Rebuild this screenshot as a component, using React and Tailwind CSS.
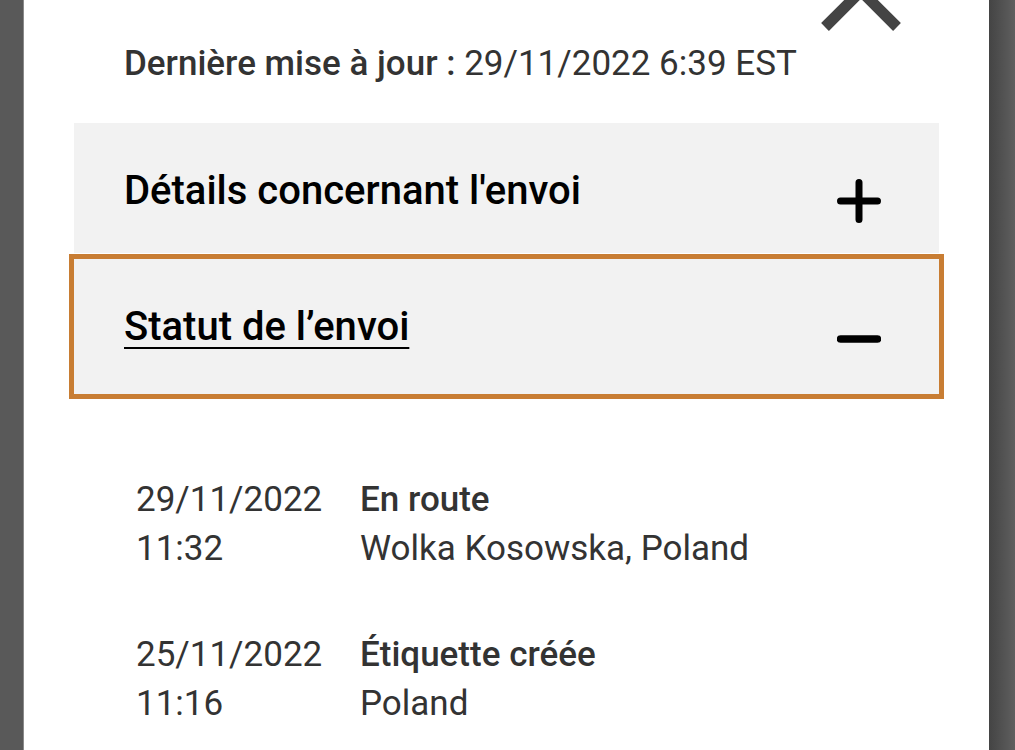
import React from "react";

const events = [
  { date: "29/11/2022", time: "11:32", status: "En route", place: "Wolka Kosowska, Poland" },
  { date: "25/11/2022", time: "11:16", status: "Étiquette créée", place: "Poland" },
];

const Plus = () => (
  <svg width="44" height="44" viewBox="0 0 44 44" className="mt-[26px] shrink-0">
    <path d="M22 3.5v37M3.5 22h37" stroke="#000" strokeWidth="7" strokeLinecap="round" />
  </svg>
);

const Minus = () => (
  <svg width="44" height="44" viewBox="0 0 44 44" className="mt-[25px] shrink-0">
    <path d="M3.5 22h37" stroke="#000" strokeWidth="7.5" strokeLinecap="round" />
  </svg>
);

export default function App() {
  return (
    <div
      className="flex h-[750px] w-[1015px] overflow-hidden bg-[#5a5a5a]"
      style={{ fontFamily: "Roboto, 'Noto Sans', sans-serif" }}
    >
      <div className="w-[24px] shrink-0 border-r border-[#8a8a8a] bg-[#595959]" />

      <div className="relative w-[965px] shrink-0 bg-white">
        {/* close button, cut off at the top */}
        <svg
          width="100"
          height="60"
          viewBox="0 0 100 60"
          className="absolute left-[786px] top-[-20px]"
        >
          <path d="M15 47 L51 11 L87 47" fill="none" stroke="#444" strokeWidth="11" strokeLinejoin="miter" />
        </svg>

        <p className="pl-[100px] pt-[44px] text-[35px] leading-[40px] text-[#333]">
          <span className="font-medium">Dernière mise à jour :</span> 29/11/2022 6:39 EST
        </p>

        <div className="mx-[50px] mt-[39px] flex h-[130px] items-center justify-between bg-[#f2f2f2] pl-[50px] pr-[58px]">
          <span className="mt-[6px] text-[40px] font-medium leading-none text-black">
            Détails concernant l'envoi
          </span>
          <Plus />
        </div>

        <div className="mx-[50px] mt-[6px] flex h-[135px] items-center justify-between bg-[#f2f2f2] pl-[50px] pr-[58px] outline-[5px] outline-[#c87d33] outline-solid">
          <span className="text-[40px] font-medium leading-none text-black underline decoration-[2px] underline-offset-[7px]">
            Statut de l’envoi
          </span>
          <Minus />
        </div>

        <div className="flex flex-col gap-[57px] pl-[112px] pt-[81px] text-[35px] leading-[49px] text-[#333]">
          {events.map((e) => (
            <div key={e.date} className="grid grid-cols-[224px_1fr]">
              <span>{e.date}</span>
              <span className="font-medium">{e.status}</span>
              <span>{e.time}</span>
              <span>{e.place}</span>
            </div>
          ))}
        </div>
      </div>

      <div className="flex-1 bg-gradient-to-r from-[#444] to-[#5f5f5f]" />
    </div>
  );
}
